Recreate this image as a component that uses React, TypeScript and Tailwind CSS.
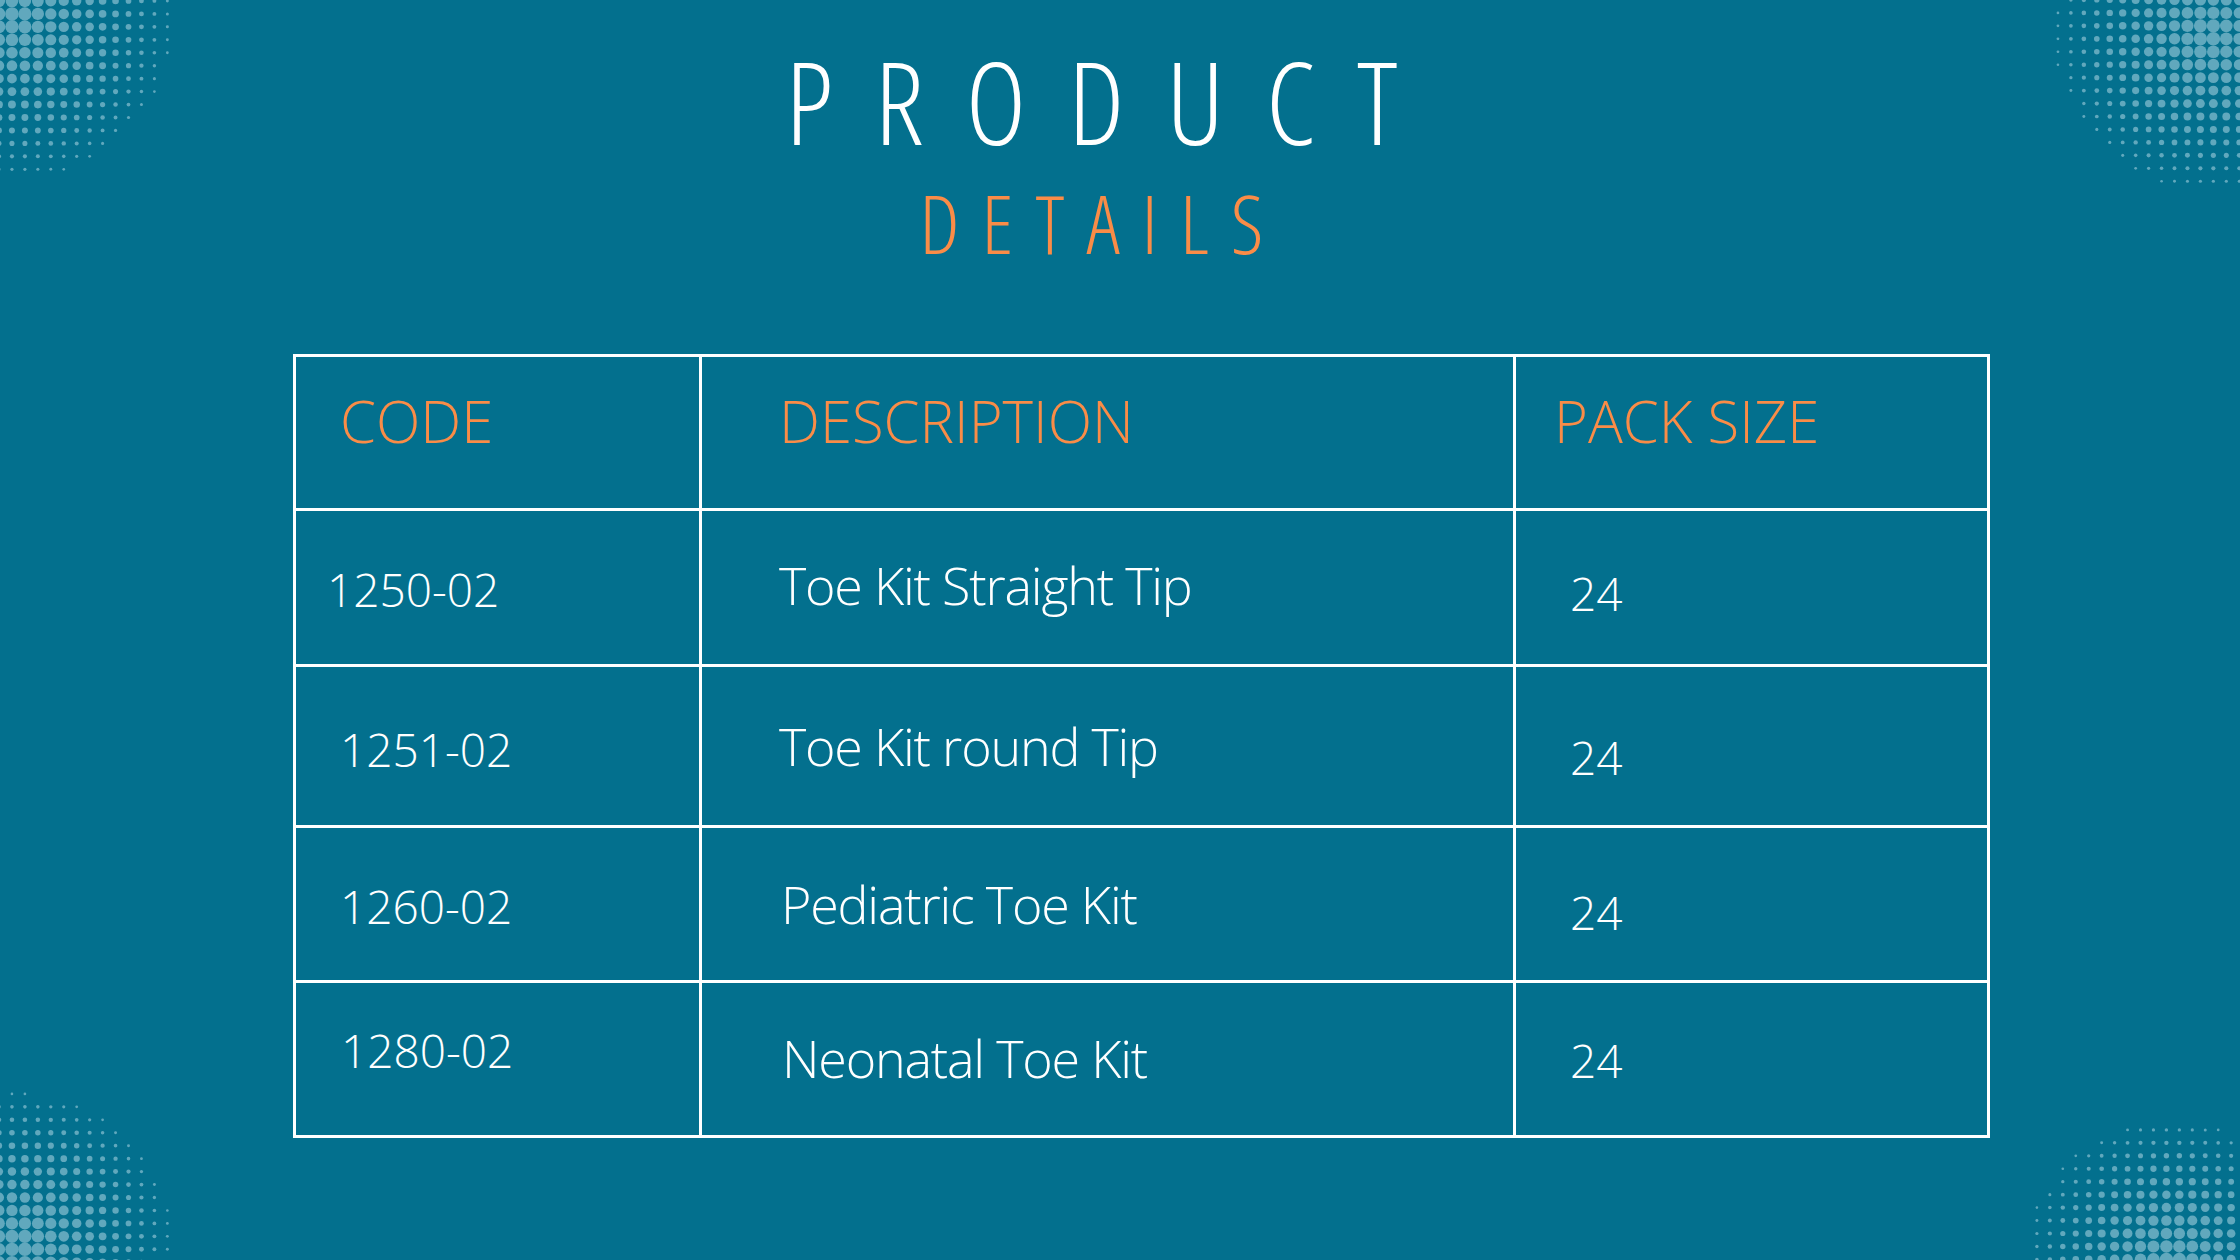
import React from "react";

type Corner = { cx: number; cy: number; R: number; x0: number; y0: number; x1: number; y1: number };

const corners: Corner[] = [
  { cx: 15, cy: 20, R: 158, x0: 12, y0: 1, x1: 200, y1: 200 },
  { cx: 2210, cy: 35, R: 155, x0: 2058, y0: 0, x1: 2240, y1: 200 },
  { cx: 20, cy: 1245, R: 152, x0: 12, y0: 1081, x1: 200, y1: 1260 },
  { cx: 2170, cy: 1265, R: 145, x0: 2024, y0: 1117, x1: 2240, y1: 1260 },
];

function Halftone() {
  const dots: { x: number; y: number; r: number }[] = [];
  for (const c of corners) {
    for (let x = c.x0 - 13; x <= c.x1 + 13; x += 12.95) {
      for (let y = c.y0 - 13; y <= c.y1 + 13; y += 12.95) {
        const d = Math.hypot(x - c.cx, y - c.cy);
        if (d < c.R) {
          const r = 1.3 + 5.7 * (1 - d / c.R);
          dots.push({ x, y, r });
        }
      }
    }
  }
  return (
    <svg className="absolute inset-0" width={2240} height={1260} viewBox="0 0 2240 1260">
      {dots.map((d, i) => (
        <circle key={i} cx={d.x} cy={d.y} r={d.r} fill="#61A8BD" />
      ))}
    </svg>
  );
}

type Cell = { text: string; pt: number; pl: number };

const rows: { h: number; cells: Cell[] }[] = [
  {
    h: 153,
    cells: [
      { text: "1250-02", pt: 55, pl: 31 },
      { text: "Toe Kit Straight Tip", pt: 48, pl: 77 },
      { text: "24", pt: 59, pl: 54 },
    ],
  },
  {
    h: 158,
    cells: [
      { text: "1251-02", pt: 59, pl: 44 },
      { text: "Toe Kit round Tip", pt: 53, pl: 77 },
      { text: "24", pt: 67, pl: 54 },
    ],
  },
  {
    h: 152,
    cells: [
      { text: "1260-02", pt: 55, pl: 44 },
      { text: "Pediatric Toe Kit", pt: 50, pl: 79 },
      { text: "24", pt: 61, pl: 54 },
    ],
  },
  {
    h: 152,
    cells: [
      { text: "1280-02", pt: 44, pl: 45 },
      { text: "Neonatal Toe Kit", pt: 49, pl: 80 },
      { text: "24", pt: 54, pl: 54 },
    ],
  },
];

export default function App() {
  const font = { fontFamily: '"Open Sans", "Noto Sans", sans-serif' };
  return (
    <div
      className="relative w-[2240px] h-[1260px] overflow-hidden bg-[#03708E]"
      style={font}
    >
      <Halftone />
      <div className="relative flex flex-col">
        <div className="mt-[43px] flex flex-col items-center pr-[57px]">
          <div className="text-[115px] leading-none font-light font-stretch-[80%] tracking-[42px] text-white pl-[42px]">
            PRODUCT
          </div>
          <div className="mt-[23px] text-[82px] leading-none font-light font-stretch-[80%] tracking-[22px] text-[#FA8C47] pl-[22px]">
            DETAILS
          </div>
        </div>
        <div className="ml-[293px] mt-[91px] w-[1697px] bg-white p-[3px] grid grid-cols-[403px_811px_471px] gap-[3px]">
          <div className="h-[151px] bg-[#03708E] pt-[35px] pl-[44px] text-[58px] leading-none font-light text-[#FA8C47]">
            CODE
          </div>
          <div className="h-[151px] bg-[#03708E] pt-[35px] pl-[77px] text-[58px] leading-none font-light text-[#FA8C47]">
            DESCRIPTION
          </div>
          <div className="h-[151px] bg-[#03708E] pt-[35px] pl-[38px] text-[58px] leading-none font-light text-[#FA8C47]">
            PACK SIZE
          </div>
          {rows.map((row, ri) =>
            row.cells.map((c, ci) => (
              <div
                key={`${ri}-${ci}`}
                className={
                  "bg-[#03708E] leading-none font-light text-white " +
                  (ci === 1 ? "text-[52px] tracking-[-1.2px]" : "text-[46px]")
                }
                style={{ height: row.h, paddingTop: c.pt, paddingLeft: c.pl }}
              >
                {c.text}
              </div>
            ))
          )}
        </div>
      </div>
    </div>
  );
}
